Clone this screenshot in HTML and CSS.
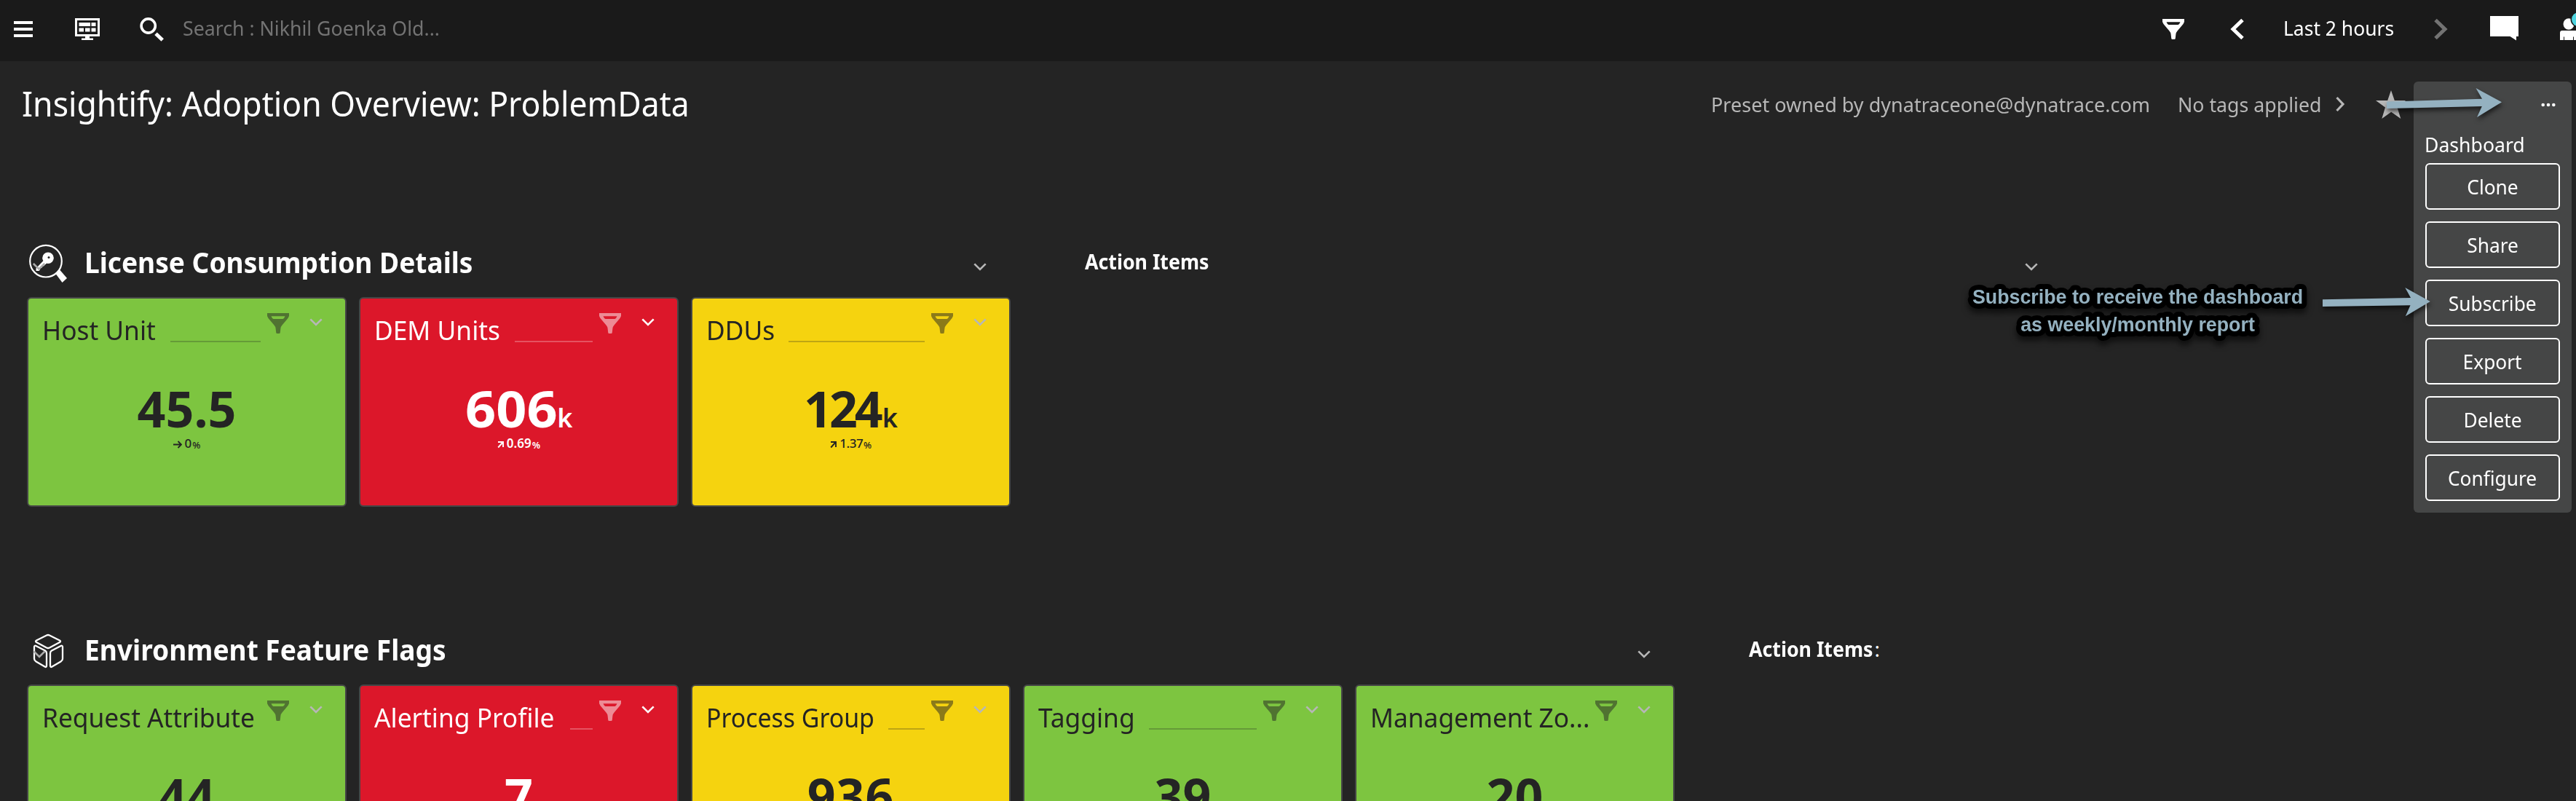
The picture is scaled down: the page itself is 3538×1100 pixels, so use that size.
FILE: index.html
```html
<!DOCTYPE html>
<html lang="en">
<head>
<meta charset="utf-8">
<title>Insightify: Adoption Overview: ProblemData</title>
<link rel="stylesheet" href="styles.css">
</head>
<body>
<svg class="defs" width="0" height="0">
  <symbol id="filter" viewBox="0 0 30 28"><path fill-rule="evenodd" d="M0 0H30V4Q29 7 26 10L20.500 16.500Q18.700 18.500 18.400 21L17.800 26.500Q17.600 28 16.500 28H13.500Q12.400 28 12.200 26.500L11.600 21Q11.300 18.500 9.500 16.500L4 10Q1 7 0 4ZM5.500 4.200Q6.500 7 8.500 8H21.500Q23.500 7 24.500 4.200Z"/></symbol>
  <symbol id="down" viewBox="0 0 18 11"><path d="M1.300 1.300L9 9L16.700 1.300" fill="none" stroke="currentColor" stroke-width="2.600"/></symbol>
</svg>

<header class="topbar">
  <svg width="80" height="84" viewBox="0 0 80 84"><path d="M19 29h26v4H19zM19 38h26v4H19zM19 47h26v4H19z"/></svg>
  <svg width="80" height="84" viewBox="80 0 80 84"><path fill-rule="evenodd" d="M103 25h34v25h-14v2.500h5v2.500h-16v-2.500h5V50h-14zM106 28v19h28V28z"/><path d="M108.500 31h15.500v5h-15.500zM125.500 31h6v5h-6zM108.500 38.500h6.500v5h-6.500zM117 38.500h6.500v5h-6.500zM125.500 38.500h6v5h-6z"/></svg>
  <svg width="80" height="84" viewBox="160 0 80 84"><circle cx="203.700" cy="35.500" r="9.600" fill="none" stroke="#fff" stroke-width="3.600"/><path d="M214 46.200L223.200 55" stroke="#fff" stroke-width="5"/></svg>
  <span class="search">Search : Nikhil Goenka Old...</span>
  <div class="topbar-right">
    <svg width="80" height="84" viewBox="2940 0 80 84"><use href="#filter" x="2970" y="26" width="30" height="28"/></svg>
    <svg width="100" height="84" viewBox="3020 0 100 84"><path d="M3080 27.500L3067 40L3080 52.500" fill="none" stroke="#fff" stroke-width="5"/></svg>
    <div class="timeframe"><span>Last 2 hours</span></div>
    <svg width="80" height="84" viewBox="3300 0 80 84"><path d="M3345 27.500L3358 40L3345 52.500" fill="none" stroke="#737373" stroke-width="5"/></svg>
    <svg width="100" height="84" viewBox="3380 0 100 84"><path d="M3420 22h39v28h-3v5.500l-8.500-5.500H3420z"/></svg>
    <svg width="58" height="84" viewBox="3480 0 58 84"><ellipse cx="3528" cy="33" rx="7.500" ry="7.800"/><path d="M3516 55V45q0-3 3-3h21v13h-5v-4.500h-1V55h-12v-4.500h-1V55z"/><circle cx="3541.500" cy="26.500" r="11" fill="#1a1a1a"/><circle cx="3541.500" cy="26.500" r="9.500" fill="#4fd5e0"/></svg>
  </div>
</header>

<div class="titlebar">
  <h1>Insightify: Adoption Overview: ProblemData</h1>
  <div class="meta">
    <div class="owner"><span>Preset owned by dynatraceone@dynatrace.com</span></div>
    <div class="tags"><span>No tags applied</span></div>
    <svg width="54" height="116" viewBox="3195 84 54 116"><path d="M3209.500 134L3218 143L3209.500 152" fill="none" stroke="#b7b7b7" stroke-width="3.200"/></svg>
    <svg width="289" height="116" viewBox="3249 84 289 116"><path fill="#b7b7b7" d="M3284 124L3288.800 138H3304L3292.500 147.500L3297.300 163L3284.200 153.800L3271.300 163L3276 147.500L3263 138H3279.200Z"/></svg>
  </div>
</div>

<main>
  <section class="license">
    <div class="section-head">
      <div class="section-title short">
        <svg width="78" height="81" viewBox="37 319 78 81"><circle cx="63" cy="358.700" r="21.800" fill="none" stroke="#fff" stroke-width="2.200"/><path d="M76.500 376L82 370.500L92 382L85.500 388Z"/><path d="M61 356.500L49.500 368.500V372H53.500L55 370.500V368H57.500V365.500H60L64.500 361Z"/><circle cx="66" cy="354.200" r="7.800"/><circle cx="67" cy="353.500" r="1.500" fill="#242424"/><path d="M45.800 362L53.500 369.500L61.200 362" fill="none" stroke="#aaa" stroke-width="2.600"/></svg>
        <h2>License Consumption Details</h2>
        <svg class="chev" width="18" height="11"><use href="#down"/></svg>
      </div>
      <div class="action">
        <b>Action Items</b>
        <svg class="chev" width="18" height="11"><use href="#down"/></svg>
      </div>
    </div>
    <div class="tiles">
      <article class="tile green">
        <div class="tile-head"><span class="name">Host Unit</span><i class="rule"></i><svg class="filter" width="30" height="28"><use href="#filter"/></svg><svg class="chev" width="18" height="11"><use href="#down"/></svg></div>
        <div class="value">45.5</div>
        <div class="trend"><svg width="12" height="11" viewBox="0 0 12 11"><path d="M0 5.500H11M6.500 1L11 5.500L6.500 10" fill="none" stroke="currentColor" stroke-width="1.900"/></svg>0<small>%</small></div>
      </article>
      <article class="tile red">
        <div class="tile-head"><span class="name">DEM Units</span><i class="rule"></i><svg class="filter" width="30" height="28"><use href="#filter"/></svg><svg class="chev" width="18" height="11"><use href="#down"/></svg></div>
        <div class="value"><span class="wide">606</span><small>k</small></div>
        <div class="trend"><svg width="9" height="11" viewBox="0 0 9 11"><path d="M1 2H8V9M8 2L1.200 9.500" fill="none" stroke="currentColor" stroke-width="1.900"/></svg>0.69<small>%</small></div>
      </article>
      <article class="tile yellow">
        <div class="tile-head"><span class="name">DDUs</span><i class="rule"></i><svg class="filter" width="30" height="28"><use href="#filter"/></svg><svg class="chev" width="18" height="11"><use href="#down"/></svg></div>
        <div class="value"><span class="tight">124</span><small>k</small></div>
        <div class="trend tight-trend"><svg width="9" height="11" viewBox="0 0 9 11"><path d="M1 2H8V9M8 2L1.200 9.500" fill="none" stroke="currentColor" stroke-width="1.900"/></svg>1.37<small>%</small></div>
      </article>
    </div>
  </section>

  <section class="features">
    <div class="section-head">
      <div class="section-title long">
        <svg width="78" height="81" viewBox="37 851 78 81"><g fill="none" stroke="#fff" stroke-width="2.300" stroke-linejoin="round"><path d="M64 872.500Q66 871.500 68 872.500L82 879.500Q84 880.700 82 882L68 889.500Q66 890.500 64 889.500L50 882Q48 880.700 50 879.500Z"/><path d="M47 888.500Q47 886 49.500 887L62 893.500Q64 894.500 64 897V914Q64 917 61.500 915.500L49.500 908.500Q47 907 47 904.500Z"/><path d="M86 888.500Q86 886 83.500 887L71 893.500Q69 894.500 69 897V914Q69 917 71.500 915.500L83.500 908.500Q86 907 86 904.500Z"/></g><path d="M46.500 894.500L54 902L61.500 894.500" fill="none" stroke="#aaa" stroke-width="2.600"/></svg>
        <h2>Environment Feature Flags</h2>
        <svg class="chev" width="18" height="11"><use href="#down"/></svg>
      </div>
      <div class="action narrow"><b>Action Items</b><span class="colon">:</span></div>
    </div>
    <div class="tiles">
      <article class="tile green">
        <div class="tile-head"><span class="name">Request Attribute</span><svg class="filter" width="30" height="28"><use href="#filter"/></svg><svg class="chev" width="18" height="11"><use href="#down"/></svg></div>
        <div class="value">44</div>
      </article>
      <article class="tile red">
        <div class="tile-head"><span class="name">Alerting Profile</span><i class="rule"></i><svg class="filter" width="30" height="28"><use href="#filter"/></svg><svg class="chev" width="18" height="11"><use href="#down"/></svg></div>
        <div class="value">7</div>
      </article>
      <article class="tile yellow">
        <div class="tile-head"><span class="name condensed">Process Group</span><i class="rule"></i><svg class="filter" width="30" height="28"><use href="#filter"/></svg><svg class="chev" width="18" height="11"><use href="#down"/></svg></div>
        <div class="value"><span class="mid">936</span></div>
      </article>
      <article class="tile green">
        <div class="tile-head"><span class="name">Tagging</span><i class="rule"></i><svg class="filter" width="30" height="28"><use href="#filter"/></svg><svg class="chev" width="18" height="11"><use href="#down"/></svg></div>
        <div class="value">39</div>
      </article>
      <article class="tile green">
        <div class="tile-head"><span class="name">Management Zo...</span><svg class="filter" width="30" height="28"><use href="#filter"/></svg><svg class="chev" width="18" height="11"><use href="#down"/></svg></div>
        <div class="value">20</div>
      </article>
    </div>
  </section>
</main>

<aside class="menu">
  <svg class="dots" width="20" height="6" viewBox="0 0 20 6"><circle cx="2.700" cy="3" r="2.300"/><circle cx="10" cy="3" r="2.300"/><circle cx="17.300" cy="3" r="2.300"/></svg>
  <h3>Dashboard</h3>
  <button><span>Clone</span></button>
  <button><span>Share</span></button>
  <button><span>Subscribe</span></button>
  <button><span>Export</span></button>
  <button><span>Delete</span></button>
  <button><span>Configure</span></button>
</aside>

<!-- Callout text and arrows over the dashboard -->
<svg class="callouts" width="858" height="400" viewBox="2680 100 858 400">
  <g class="arrow">
    <path d="M3278 139.500L3409 135.800L3400.500 121L3436 140.300L3402 161L3408.800 146L3278 149Z"/>
    <path d="M3190 411.300L3311 409L3303.300 395L3337.800 414L3303.800 434.300L3310.500 419.300L3190 421Z"/>
  </g>
  <g class="callout-text" text-anchor="middle">
    <text x="2936" y="417">Subscribe to receive the dashboard</text>
    <text x="2936" y="455">as weekly/monthly report</text>
  </g>
</svg>
</body>
</html>
```
FILE: styles.css
```css
* { box-sizing: border-box; }

body {
  margin: 0;
  width: 3538px;
  height: 1100px;
  overflow: hidden;
  position: relative;
  background: #242424;
  color: #fff;
  font-family: "Noto Sans", "Open Sans", sans-serif;
  font-size: 28px;
}

svg { display: block; flex: none; fill: #fff; }
.defs { position: absolute; }
h1, h2, h3 { margin: 0; white-space: nowrap; transform-origin: 0 0; }
span, b { display: inline-block; white-space: nowrap; transform-origin: 0 0; }

/* Top bar */
.topbar { display: flex; height: 84px; background: #1a1a1a; line-height: 77px; }
.search { margin-left: 11px; color: #737373; transform: scaleX(.953); }
.topbar-right { display: flex; margin-left: auto; }
.timeframe { width: 180px; padding-left: 16px; }
.timeframe span { transform: scaleX(.945); }

/* Title row */
.titlebar { display: flex; justify-content: space-between; height: 116px; padding-left: 30px; }
h1 { font-size: 48px; font-weight: 400; line-height: 116px; transform: scaleX(.928); }
.meta { display: flex; color: #b7b7b7; line-height: 118px; }
.owner { width: 641px; }
.owner span { transform: scaleX(.965); }
.tags { width: 204px; }
.tags span { transform: scaleX(.955); }

/* Sections */
main { height: 900px; overflow: hidden; }
.license { padding-top: 119px; }
.features { padding-top: 155px; }
.section-head { display: flex; height: 81px; padding-left: 37px; }
.section-title { display: flex; flex: none; align-items: center; }
.section-title.short { width: 1318px; }
.section-title.long { width: 2230px; }
h2 { margin-left: 1px; font-size: 40px; font-weight: 700; line-height: 82px; transform: scaleX(.927); }
.chev { color: #b7b7b7; }
.section-head .chev { margin-left: auto; margin-top: 14px; }
.action { display: flex; align-items: center; width: 1309px; margin-left: 135px; line-height: 83px; }
.action.narrow { width: auto; }
.action b { transform: scaleX(.955); }
.colon { margin-left: -6px; }

/* Tiles */
.tiles { display: flex; gap: 17px; padding: 8px 0 0 37px; }
.tile { width: 439px; height: 288px; border: 2px solid #454646; border-radius: 6px; color: #242424; }
.green { background: #7dc540; }
.red { background: #dc172a; color: #fff; }
.yellow { background: #f5d30f; }
.tile-head { display: flex; height: 86px; padding: 0 31px 0 19px; }
.name { font-size: 36px; line-height: 87px; transform: scaleX(.98); }
.condensed { margin-right: -13px; transform: scaleX(.94); }
.rule { flex: 1; height: 2px; margin: 58px 0 0 17px; background: currentColor; opacity: .26; }
.filter { margin: 20px 0 0 auto; fill: currentColor; opacity: .5; }
.rule + .filter { margin-left: 9px; }
.tile .chev { margin: 27px 0 0 28px; }
.red .chev { color: #fff; }
.value { height: 130px; font-size: 68px; font-weight: 700; line-height: 130px; text-align: center; }
.value small { font-size: 36px; font-weight: 600; }
.wide { margin-left: 10px; transform: scaleX(1.085); transform-origin: 100% 0; }
.mid { letter-spacing: 1px; }
.tight { letter-spacing: -4px; margin-right: 3px; }
.trend { display: flex; align-items: center; justify-content: center; height: 20px; margin-top: -27px; font-size: 17px; font-weight: 500; line-height: 20px; }
.trend svg { margin-right: 4px; margin-top: 2px; }
.trend small { font-size: 13px; margin: 3px 0 0 1px; }
.red .trend { font-weight: 600; }
.tight-trend { letter-spacing: -.5px; }

/* Dashboard menu */
.menu { position: absolute; top: 112px; left: 3315px; width: 217px; height: 592px; padding: 29px 16px 0; border-radius: 6px; background: #454646; }
.dots { margin: 0 6px 0 auto; }
h3 { margin-left: -1px; padding-top: 31px; font-size: 28px; font-weight: 400; line-height: 40px; transform: scaleX(.95); }
button { display: block; width: 185px; height: 64px; margin: 0 0 16px; padding: 0; border: 2px solid #fff; border-radius: 6px; background: none; color: #fff; font: 28px/60px "Noto Sans", "Open Sans", sans-serif; }
h3 + button { margin-top: 6px; }
button span { transform: scaleX(.94); transform-origin: 50% 0; }

/* Callouts */
.callouts { position: absolute; top: 100px; left: 2680px; }
.arrow { fill: #94b1c0; filter: drop-shadow(1px 4px 3px rgba(0, 0, 0, .6)); }
.callout-text { fill: #94b1c0; stroke: #000; stroke-width: 14px; stroke-linejoin: round; paint-order: stroke; font: 700 26.8px "Liberation Sans", Arial, sans-serif; filter: drop-shadow(0 6px 4px rgba(0, 0, 0, .6)); }
```
